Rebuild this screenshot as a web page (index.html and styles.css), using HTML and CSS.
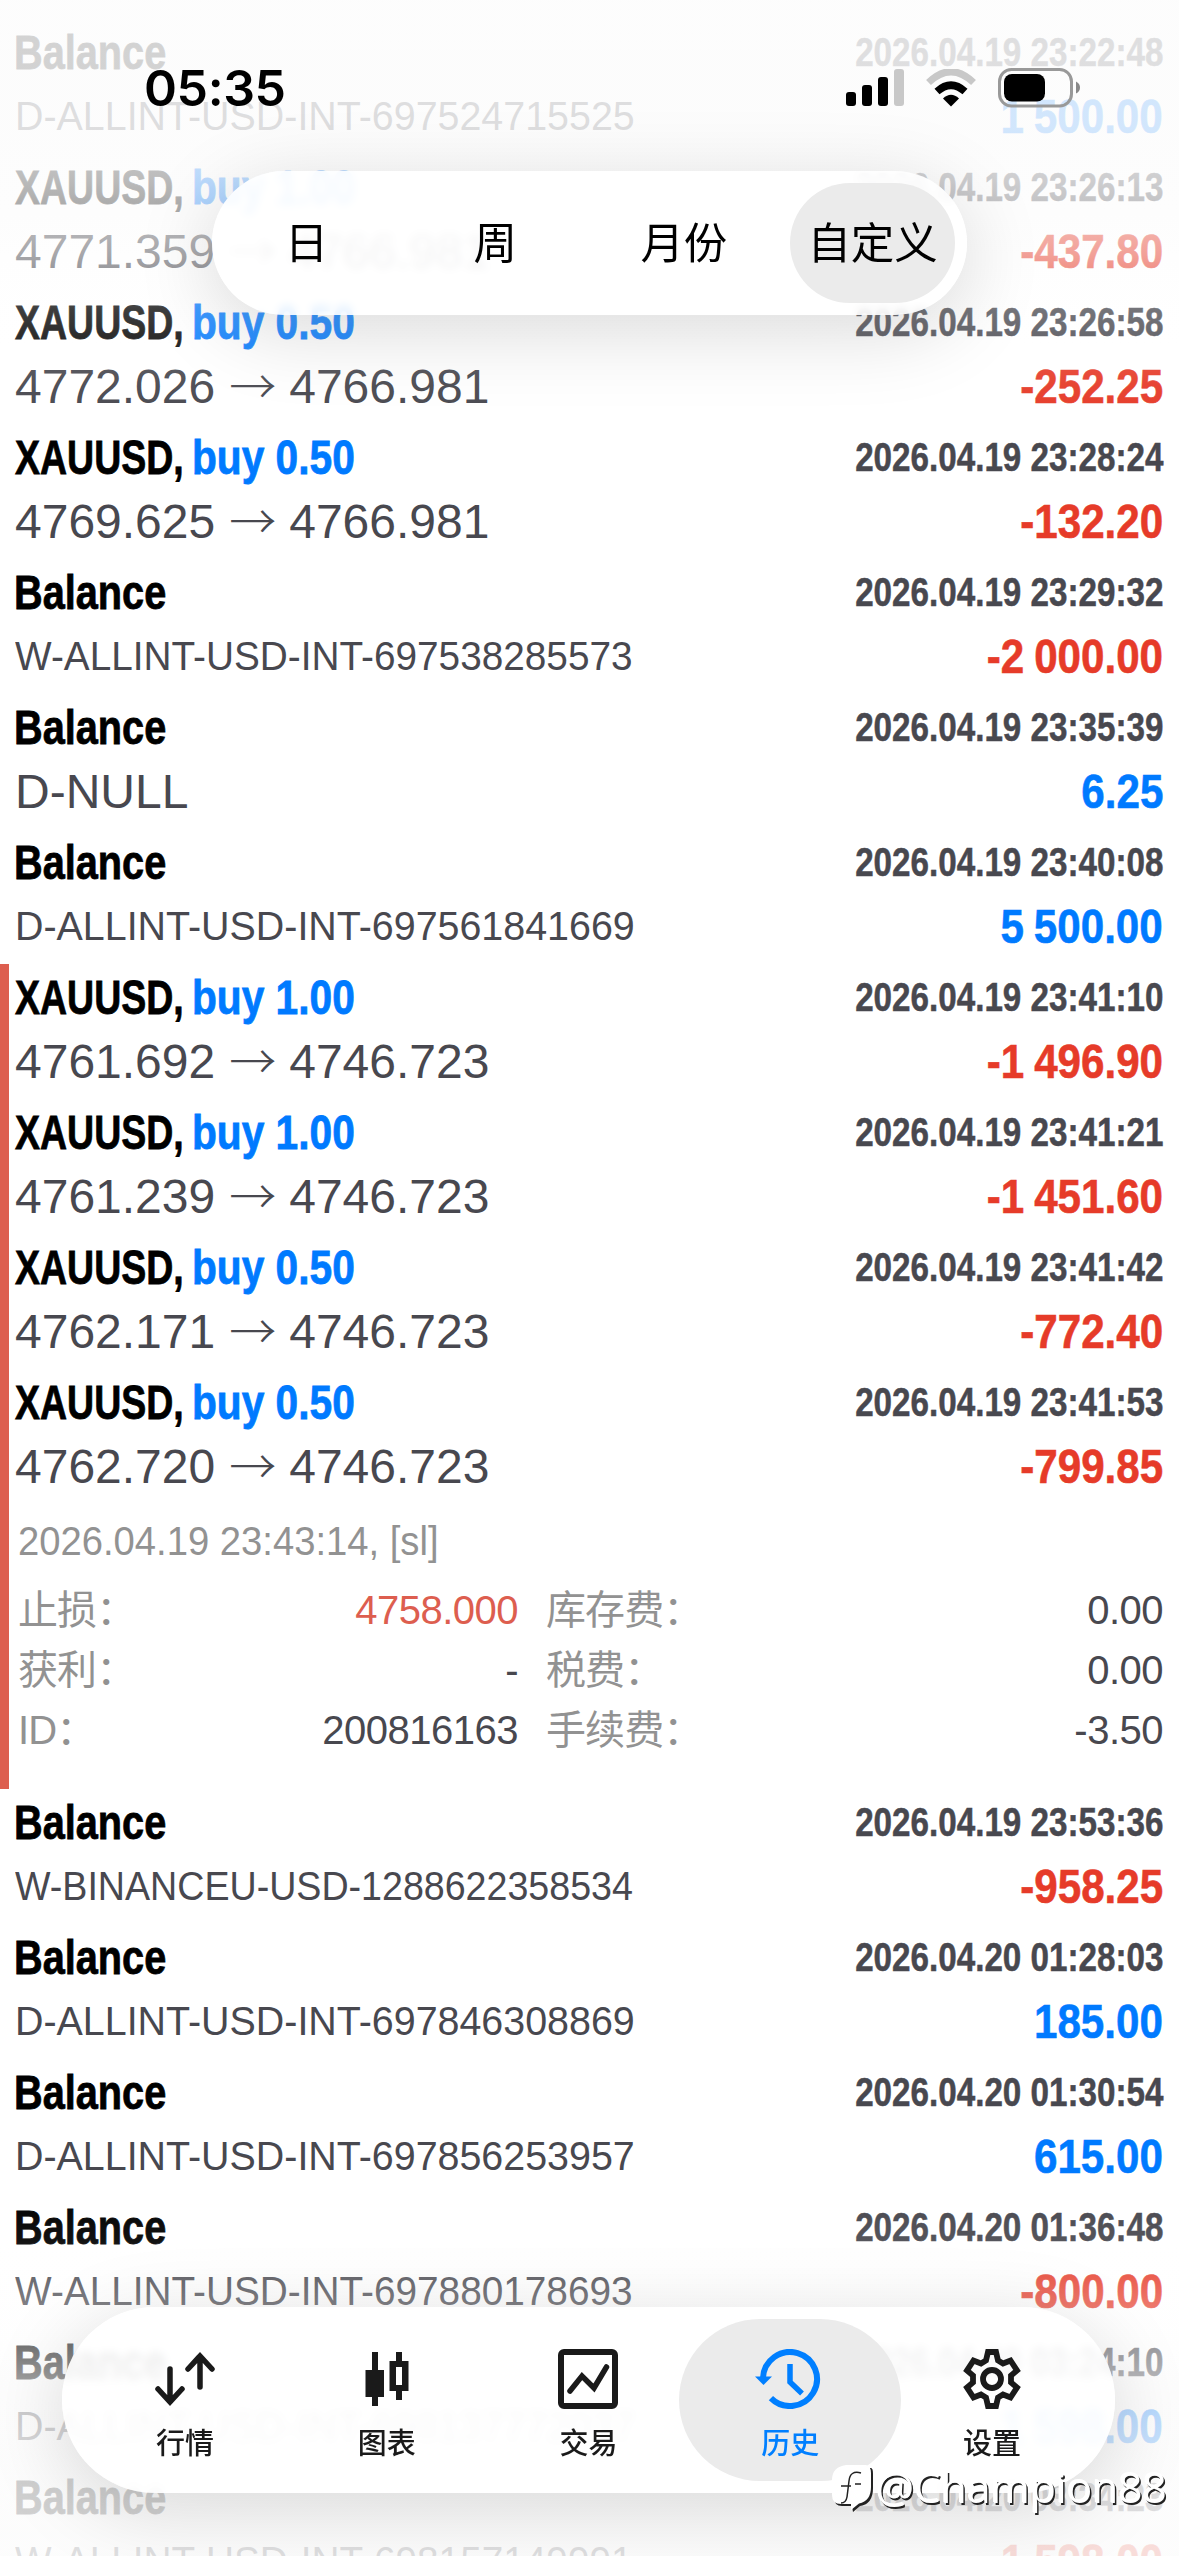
FILE: index.html
```html
<!DOCTYPE html>
<html lang="zh-CN">
<head>
<meta charset="utf-8">
<title>历史</title>
<link rel="stylesheet" href="styles.css">
</head>
<body>
<main class="screen">
  <section class="history">
    <article class="deal"><span class="title"><b class="bal">Balance</b></span><time class="date">2026.04.19 23:22:48</time><span class="note note-d">D-ALLINT-USD-INT-697524715525</span><span class="amount up">1 500.00</span></article>
    <article class="deal"><span class="title"><b class="symbol">XAUUSD,</b><b class="side">buy 1.00</b></span><time class="date">2026.04.19 23:26:13</time><span class="prices"><span>4771.359</span><i class="arrow">→</i><span>4766.981</span></span><span class="amount down">-437.80</span></article>
    <article class="deal"><span class="title"><b class="symbol">XAUUSD,</b><b class="side">buy 0.50</b></span><time class="date">2026.04.19 23:26:58</time><span class="prices"><span>4772.026</span><i class="arrow">→</i><span>4766.981</span></span><span class="amount down">-252.25</span></article>
    <article class="deal"><span class="title"><b class="symbol">XAUUSD,</b><b class="side">buy 0.50</b></span><time class="date">2026.04.19 23:28:24</time><span class="prices"><span>4769.625</span><i class="arrow">→</i><span>4766.981</span></span><span class="amount down">-132.20</span></article>
    <article class="deal"><span class="title"><b class="bal">Balance</b></span><time class="date">2026.04.19 23:29:32</time><span class="note note-w">W-ALLINT-USD-INT-697538285573</span><span class="amount down">-2 000.00</span></article>
    <article class="deal"><span class="title"><b class="bal">Balance</b></span><time class="date">2026.04.19 23:35:39</time><span class="prices"><span>D-NULL</span></span><span class="amount up">6.25</span></article>
    <article class="deal"><span class="title"><b class="bal">Balance</b></span><time class="date">2026.04.19 23:40:08</time><span class="note note-d">D-ALLINT-USD-INT-697561841669</span><span class="amount up">5 500.00</span></article>
    <div class="stopped">
      <article class="deal"><span class="title"><b class="symbol">XAUUSD,</b><b class="side">buy 1.00</b></span><time class="date">2026.04.19 23:41:10</time><span class="prices"><span>4761.692</span><i class="arrow">→</i><span>4746.723</span></span><span class="amount down">-1 496.90</span></article>
      <article class="deal"><span class="title"><b class="symbol">XAUUSD,</b><b class="side">buy 1.00</b></span><time class="date">2026.04.19 23:41:21</time><span class="prices"><span>4761.239</span><i class="arrow">→</i><span>4746.723</span></span><span class="amount down">-1 451.60</span></article>
      <article class="deal"><span class="title"><b class="symbol">XAUUSD,</b><b class="side">buy 0.50</b></span><time class="date">2026.04.19 23:41:42</time><span class="prices"><span>4762.171</span><i class="arrow">→</i><span>4746.723</span></span><span class="amount down">-772.40</span></article>
      <article class="deal"><span class="title"><b class="symbol">XAUUSD,</b><b class="side">buy 0.50</b></span><time class="date">2026.04.19 23:41:53</time><span class="prices"><span>4762.720</span><i class="arrow">→</i><span>4746.723</span></span><span class="amount down">-799.85</span></article>
      <div class="details">
        <p class="closed"><span>2026.04.19 23:43:14, [sl]</span></p>
        <dl class="facts">
          <dt>止损：</dt><dd class="sl">4758.000</dd><dt class="second">库存费：</dt><dd>0.00</dd>
          <dt>获利：</dt><dd>-</dd><dt class="second">税费：</dt><dd>0.00</dd>
          <dt>ID：</dt><dd>200816163</dd><dt class="second">手续费：</dt><dd>-3.50</dd>
        </dl>
      </div>
    </div>
    <article class="deal"><span class="title"><b class="bal">Balance</b></span><time class="date">2026.04.19 23:53:36</time><span class="note note-b">W-BINANCEU-USD-1288622358534</span><span class="amount down">-958.25</span></article>
    <article class="deal"><span class="title"><b class="bal">Balance</b></span><time class="date">2026.04.20 01:28:03</time><span class="note note-d">D-ALLINT-USD-INT-697846308869</span><span class="amount up">185.00</span></article>
    <article class="deal"><span class="title"><b class="bal">Balance</b></span><time class="date">2026.04.20 01:30:54</time><span class="note note-d">D-ALLINT-USD-INT-697856253957</span><span class="amount up">615.00</span></article>
    <article class="deal"><span class="title"><b class="bal">Balance</b></span><time class="date">2026.04.20 01:36:48</time><span class="note note-w">W-ALLINT-USD-INT-697880178693</span><span class="amount down">-800.00</span></article>
    <article class="deal"><span class="title"><b class="bal">Balance</b></span><time class="date">2026.04.20 03:24:10</time><span class="note note-d">D-ALLINT-USD-INT-698137772037</span><span class="amount up">1 598.00</span></article>
    <article class="deal"><span class="title"><b class="bal">Balance</b></span><time class="date">2026.04.20 03:34:23</time><span class="note note-w">W-ALLINT-USD-INT-698157149991</span><span class="amount down">-1 598.00</span></article>
  </section>

  <div class="fade fade-top"></div>
  <div class="fade fade-bottom"></div>

  <header class="status">
    <span class="clock">05:35</span>
    <svg class="signal" width="58" height="38" viewBox="0 0 58 38"><rect y="23" width="10" height="14" rx="3"/><rect x="16" y="16" width="10" height="21" rx="3"/><rect x="32" y="8" width="10" height="29" rx="3"/><rect x="48" width="10" height="37" rx="3" fill="#c8c8c8"/></svg>
    <svg class="wifi" width="52" height="38" viewBox="0 0 52 38"><path d="M3.500 13.500Q26-8 48.500 13.500" fill="none" stroke="#c8c8c8" stroke-width="7"/><path d="M12 22.500Q26 10 40 22.500" fill="none" stroke="#000" stroke-width="7.500"/><path d="M18 29.500Q26 22 34 29.500L26 37.500Z"/></svg>
    <svg class="battery" width="83" height="40" viewBox="0 0 83 40"><rect x="1.500" y="1.500" width="72" height="36.500" rx="12" fill="none" stroke="#999" stroke-width="3"/><rect x="6" y="6" width="41" height="27.500" rx="8"/><path d="M78 13.500q4 2 4 6t-4 6z" fill="#888"/></svg>
  </header>

  <nav class="period glass">
    <span class="period-tab">日</span><span class="period-tab">周</span><span class="period-tab">月份</span><span class="period-tab current">自定义</span>
  </nav>

  <nav class="tabs glass">
    <span class="tab"><svg width="60" height="60" viewBox="0 0 60 60" fill="none" stroke="#1a1a1a" stroke-width="5.500" stroke-linecap="round"><path d="M15 20V52M3 40L15 53L27 40M45 38V8M33 20L45 7L57 20"/></svg><span>行情</span></span>
    <span class="tab"><svg width="60" height="60" viewBox="0 0 60 60" fill="#1a1a1a"><path d="M15 3h6v18h6v27h-6v9h-6v-9H8.500V21H15z"/><path fill-rule="evenodd" d="M39 3h6v9h6.500v30H45v9h-6v-9h-6.500V12H39zM39 18v18h6V18z"/></svg><span>图表</span></span>
    <span class="tab"><svg width="60" height="60" viewBox="0 0 60 60" fill="none" stroke="#1a1a1a" stroke-width="6"><rect x="3" y="3" width="54" height="54" rx="3"/><path d="M12 42L24 27L36 39L48.500 18" stroke-width="5.500" stroke-linecap="round"/></svg><span>交易</span></span>
    <span class="tab current"><svg width="70" height="60" viewBox="0 0 70 60" fill="none" stroke="#007fff" stroke-width="6"><path d="M8 29A27 27 0 1 1 15.900 49.100"/><path d="M0 27.500H17L8.500 36Z" fill="#007fff" stroke="none"/><path d="M35 15V33L47 44.500" stroke-width="5.500"/></svg><span>历史</span></span>
    <span class="tab"><svg width="60" height="60" viewBox="-30 -30 60 60" fill="none" stroke="#1a1a1a" stroke-width="5.800"><path d="M-4-27H4L6-18.500L11-15.500L18.500-18.500L25-8.500L19-3.500V3.500L25 8.500L18.500 18.500L11 15.500L6 18.500L4 27H-4L-6 18.500L-11 15.500L-18.500 18.500L-25 8.500L-19 3.500V-3.500L-25-8.500L-18.500-18.500L-11-15.500L-6-18.500Z"/><circle r="9"/></svg><span>设置</span></span>
  </nav>

  <div class="credit">
    <svg width="42" height="48" viewBox="0 0 42 48"><path d="M14 2H38Q40 2 40 8V22Q40 38 27 40L20 46L19 40H9Q1 40 1 31V16Q1 3 14 2Z" fill="#222" transform="translate(1 1)"/><path d="M14 0H34Q39 1 39 8V22Q39 36 27 38.500L19 45V39H9Q0 39 0 30V15Q0 2 14 0Z" fill="#fff"/><path d="M29 8Q18 5 17 16L15 32Q14 38 9 38M9 21H19M23 19H29" fill="none" stroke="#222" stroke-width="1.500"/></svg>
    <span>@Champion88</span>
  </div>
</main>
</body>
</html>
```
FILE: styles.css
```css
* { box-sizing: border-box; }

body {
  margin: 0;
  background: #fff;
  font-family: "Liberation Sans", "Noto Sans CJK SC", sans-serif;
  color: #48484f;
}

.screen {
  position: relative;
  width: 1179px;
  height: 2556px;
  overflow: hidden;
}

.history { padding-top: 19px; }

.deal {
  display: grid;
  grid-template-columns: 1fr auto;
  grid-template-rows: 68px 67px;
  height: 135px;
  padding: 0 16px;
  white-space: nowrap;
}

.title {
  display: flex;
  height: 68px;
  font-size: 49px;
  line-height: 67px;
  color: #000;
  -webkit-text-stroke: .8px;
}

.bal, .symbol, .side { transform-origin: 0 50%; }
.bal { transform: scaleX(.81); margin-left: -2px; }
.symbol { width: 177px; margin-left: -1px; transform: scaleX(.765); }
.side { color: #007aff; transform: scaleX(.83); }

.date {
  justify-self: end;
  font-size: 40px;
  font-weight: 700;
  line-height: 67px;
  transform: scaleX(.83);
  transform-origin: 100% 50%;
  -webkit-text-stroke: .5px;
}

.note {
  justify-self: start;
  font-size: 40px;
  line-height: 58px;
  transform-origin: 0 50%;
}
.note-d { transform: scaleX(.985); margin-left: -1px; }
.note-w { transform: scaleX(.969); margin-left: -1px; }
.note-b { transform: scaleX(.94); margin-left: -1px; }

.prices {
  display: flex;
  margin-left: -1px;
  font-size: 48px;
  line-height: 59px;
}

.arrow {
  width: 74px;
  padding-left: 14px;
  font: 300 47px/53px "Noto Sans CJK SC", sans-serif;
}

.amount {
  justify-self: end;
  font-size: 49px;
  font-weight: 700;
  line-height: 58px;
  word-spacing: -2px;
  transform: scaleX(.86);
  transform-origin: 100% 50%;
  -webkit-text-stroke: .6px;
}
.up { color: #007aff; }
.down { color: #e63b29; }

.stopped { box-shadow: inset 9px 0 #dd5e4f; }

.details {
  height: 285px;
  padding: 9px 16px 0 18px;
  font-size: 40px;
}

.closed {
  margin: 0;
  line-height: 57px;
  color: #929292;
}
.closed span {
  display: inline-block;
  transform: scaleX(.955);
  transform-origin: 0 50%;
}

.facts {
  display: grid;
  grid-template-columns: 200px 300px 1fr 200px;
  grid-auto-rows: 60px;
  margin: 10px 0 0;
  line-height: 60px;
  letter-spacing: -.5px;
}
.facts dt {
  color: #929292;
  letter-spacing: -.9px;
}
.facts dd { margin: 0; text-align: right; }
.facts .second { padding-left: 28px; }
.facts .sl { color: #dd5e4f; }

.fade { position: absolute; left: 0; right: 0; }
.fade-top {
  top: 0;
  height: 430px;
  background: linear-gradient(rgba(252,252,252,.84) 0, rgba(252,252,252,.83) 130px, rgba(252,252,252,.74) 180px, rgba(252,252,252,.66) 215px, rgba(253,253,253,.52) 255px, rgba(254,254,254,.24) 310px, rgba(255,255,255,.14) 350px, rgba(255,255,255,.05) 385px, rgba(255,255,255,0) 430px);
}
.fade-bottom {
  bottom: 0;
  height: 366px;
  background: linear-gradient(rgba(255,255,255,0) 0, rgba(255,255,255,.07) 50px, rgba(254,254,254,.18) 86px, rgba(254,254,254,.3) 114px, rgba(253,253,253,.45) 155px, rgba(252,252,252,.62) 190px, rgba(252,252,252,.74) 225px, rgba(252,252,252,.81) 270px, rgba(252,252,252,.84) 366px);
}

.status {
  position: absolute;
  top: 0;
  left: 0;
  right: 0;
  display: flex;
  align-items: center;
  height: 176px;
  padding: 0 98px 0 144px;
}
.clock {
  margin-right: auto;
  font: 600 50px/60px Inter, sans-serif;
  letter-spacing: -.4px;
  color: #000;
}
.wifi { margin-left: 21px; }
.battery { margin-left: 21px; }

.glass {
  position: absolute;
  display: flex;
  background: rgba(255,255,255,.87);
  backdrop-filter: blur(4px);
  box-shadow: 0 16px 80px rgba(0,0,0,.15);
  font-family: "Noto Sans CJK SC", sans-serif;
}

.period {
  top: 171px;
  left: 212px;
  width: 755px;
  height: 144px;
  padding: 12px;
  justify-content: flex-end;
  gap: 24px;
  border-radius: 72px;
  font-size: 43.5px;
  color: #000;
}
.period-tab {
  width: 165px;
  height: 120px;
  line-height: 116px;
  text-align: center;
  border-radius: 60px;
}
.period-tab.current { background: #ebebeb; }

.tabs {
  top: 2307px;
  left: 62px;
  width: 1053px;
  height: 186px;
  padding: 12px 22px;
  border-radius: 93px;
}
.tab {
  position: relative;
  flex: 1;
  display: flex;
  flex-direction: column;
  align-items: center;
  gap: 10px;
  padding-top: 30px;
  font-size: 29px;
  font-weight: 500;
  line-height: 44px;
  color: #1a1a1a;
}
.tab.current { color: #007fff; }
.tab.current::before {
  content: "";
  position: absolute;
  z-index: -1;
  inset: 0 -10px;
  border-radius: 81px;
  background: #ebebeb;
}

.credit {
  position: absolute;
  top: 2465px;
  left: 832px;
  display: flex;
  align-items: center;
  gap: 2px;
  font: 400 42.5px/52px "Open Sans", sans-serif;
  color: #fff;
  text-shadow: 1.5px 1.5px 0 #222, -1px -1px 0 #fff;
}
.credit span { margin-top: -4px; }
```
